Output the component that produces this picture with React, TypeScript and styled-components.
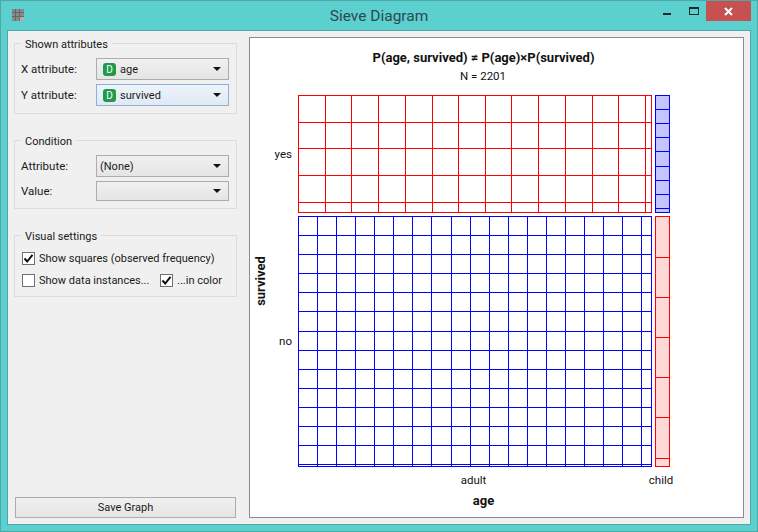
import styled, { createGlobalStyle } from 'styled-components'

const GlobalStyle = createGlobalStyle`
  html, body {
    margin: 0;
    padding: 0;
    background: #5ccfcf;
  }
  body {
    font-family: Roboto, "Noto Sans", sans-serif;
    font-size: 11px;
    color: #1a1a1a;
  }
`

const redX = [298, 325, 351, 378, 405, 432, 458, 485, 511, 538, 565, 592, 618, 645, 651]
const redY = [95, 122, 148, 175, 202, 212]
const blueX = [298, 317, 336, 355, 374, 393, 412, 431, 451, 470, 489, 508, 527, 546, 565, 584, 603, 622, 641, 651]
const blueY = [216, 235, 254, 273, 292, 311, 331, 350, 369, 388, 407, 426, 445, 464, 466]
const sideBlueY = [95, 109, 123, 137, 151, 166, 180, 194, 208, 212]
const sideRedY = [216, 257, 297, 337, 377, 417, 458, 466]

const Grid = ({ xs, ys, color }: { xs: number[]; ys: number[]; color: string }) => (
  <g stroke={color} strokeWidth="1" shapeRendering="crispEdges">
    {xs.map((x) => (
      <line key={x} x1={x + 0.5} x2={x + 0.5} y1={ys[0]} y2={ys[ys.length - 1] + 1} />
    ))}
    {ys.map((y) => (
      <line key={y} x1={xs[0]} x2={xs[xs.length - 1] + 1} y1={y + 0.5} y2={y + 0.5} />
    ))}
  </g>
)

const SideBar = ({ ys, color, fill }: { ys: number[]; color: string; fill: string }) => (
  <g shapeRendering="crispEdges">
    <rect x={655} y={ys[0]} width={15} height={ys[ys.length - 1] - ys[0] + 1} fill={fill} />
    <Grid xs={[655, 669]} ys={ys} color={color} />
  </g>
)

const Diagram = () => (
  <Plot viewBox="250 38 493 479">
    <PlotText x={483.5} y={62} textAnchor="middle" $bold>
      P(age, survived) ≠ P(age)×P(survived)
    </PlotText>
    <PlotText x={483} y={80} textAnchor="middle">N = 2201</PlotText>

    <Grid xs={redX} ys={redY} color="#ff0000" />
    <Grid xs={blueX} ys={blueY} color="#0000ff" />
    <SideBar ys={sideBlueY} color="#0000ff" fill="#c4c4ff" />
    <SideBar ys={sideRedY} color="#ff0000" fill="#ffd8d8" />

    <PlotText x={292} y={158} textAnchor="end">yes</PlotText>
    <PlotText x={292} y={345} textAnchor="end">no</PlotText>
    <PlotText x={473.5} y={484} textAnchor="middle">adult</PlotText>
    <PlotText x={661} y={484} textAnchor="middle">child</PlotText>
    <PlotText x={483.5} y={505} textAnchor="middle" $bold>age</PlotText>
    <PlotText x={265} y={281} textAnchor="middle" transform="rotate(-90 265 281)" $bold>
      survived
    </PlotText>
  </Plot>
)

const Combo = ({ value, tag, focused, short }: { value?: string; tag?: boolean; focused?: boolean; short?: boolean }) => (
  <ComboBox $focused={focused} $short={short}>
    {tag && <Tag>D</Tag>}
    <ComboValue>{value}</ComboValue>
    <Arrow />
  </ComboBox>
)

const Check = ({ checked }: { checked?: boolean }) => (
  <CheckBox>
    {checked && (
      <svg width="11" height="11" viewBox="0 0 11 11">
        <path d="M1.5 5.5 L4.2 8.5 L9.5 1.8" fill="none" stroke="#111" strokeWidth="2" />
      </svg>
    )}
  </CheckBox>
)

const App = () => {
  return (
    <Window>
      <GlobalStyle />
      <TitleBar>
        <AppIcon width="12" height="12" viewBox="0 0 12 12">
          <rect width="12" height="12" fill="#8a8a8a" />
          <path d="M0 3.5H12M0 7.5H12M3.5 0V12M7.5 0V12" stroke="#666" strokeWidth="1" />
          <rect x="8" y="8" width="4" height="4" fill="#a8b4b4" />
        </AppIcon>
        <Title>Sieve Diagram</Title>
        <Controls>
          <Minimize />
          <Maximize />
          <Close>
            <svg width="9" height="9" viewBox="0 0 9 9">
              <path d="M1 1L8 8M8 1L1 8" stroke="#fff" strokeWidth="2" />
            </svg>
          </Close>
        </Controls>
      </TitleBar>

      <Client>
        <Sidebar>
          <Group $height={71}>
            <Legend>Shown attributes</Legend>
            <FormRow>
              <FieldLabel>X attribute:</FieldLabel>
              <Combo value="age" tag />
            </FormRow>
            <FormRow>
              <FieldLabel>Y attribute:</FieldLabel>
              <Combo value="survived" tag focused />
            </FormRow>
          </Group>

          <Group $height={69}>
            <Legend>Condition</Legend>
            <FormRow>
              <FieldLabel>Attribute:</FieldLabel>
              <Combo value="(None)" />
            </FormRow>
            <FormRow>
              <FieldLabel>Value:</FieldLabel>
              <Combo short />
            </FormRow>
          </Group>

          <Group $height={62} $compact>
            <Legend>Visual settings</Legend>
            <CheckRow>
              <Check checked />
              Show squares (observed frequency)
            </CheckRow>
            <CheckRow>
              <Check />
              <WideLabel>Show data instances...</WideLabel>
              <Check checked />
              ...in color
            </CheckRow>
          </Group>

          <SaveButton>Save Graph</SaveButton>
        </Sidebar>

        <PlotPanel>
          <Diagram />
        </PlotPanel>
      </Client>
    </Window>
  )
}

const Window = styled.div`
  width: 758px;
  height: 532px;
  box-sizing: border-box;
  display: flex;
  flex-direction: column;
  background: #5ccfcf;
  border: 1px solid #4fa8a8;
  overflow: hidden;
`

const TitleBar = styled.div`
  position: relative;
  height: 29px;
  flex: none;
  display: flex;
  align-items: flex-start;
`

const AppIcon = styled.svg`
  margin: 8px 0 0 11px;
  flex: none;
`

const Title = styled.div`
  position: absolute;
  left: 0;
  right: 0;
  top: 4px;
  text-align: center;
  font-size: 15.5px;
  line-height: 22px;
  color: #2c4a4f;
`

const Controls = styled.div`
  margin-left: auto;
  margin-right: 6px;
  display: flex;
  align-items: flex-start;
  z-index: 1;
`

const Minimize = styled.div`
  width: 8px;
  height: 2px;
  margin-top: 12px;
  background: #1c2c2e;
`

const Maximize = styled.div`
  width: 10px;
  height: 8px;
  box-sizing: border-box;
  margin: 6px 7px 0 18px;
  border: 1px solid #1c2c2e;
  border-top-width: 2px;
`

const Close = styled.div`
  width: 45px;
  height: 20px;
  background: #c75050;
  display: flex;
  align-items: center;
  justify-content: center;
`

const Client = styled.div`
  flex: 1;
  margin: 0 6px 6px 6px;
  border: 1px solid #4fa8a8;
  background: #f0f0f0;
  display: flex;
  padding: 6px;
  min-height: 0;
`

const Sidebar = styled.div`
  width: 223px;
  flex: none;
  display: flex;
  flex-direction: column;
`

const Group = styled.div<{ $height: number; $compact?: boolean }>`
  position: relative;
  height: ${(p) => p.$height}px;
  box-sizing: border-box;
  margin-top: 6px;
  margin-bottom: 20px;
  border: 1px solid #dcdcdc;
  padding: ${(p) => (p.$compact ? '16px 6px 0 7px' : '14px 7px 0 6px')};
  display: flex;
  flex-direction: column;
  gap: ${(p) => (p.$compact ? '9px' : '4px')};
`

const Legend = styled.div`
  position: absolute;
  left: 6px;
  top: -7px;
  padding: 0 4px;
  background: #f0f0f0;
  line-height: 15px;
`

const FormRow = styled.div`
  display: flex;
  align-items: center;
`

const FieldLabel = styled.div`
  width: 75px;
  flex: none;
  font-size: 11.5px;
`

const ComboBox = styled.div<{ $focused?: boolean; $short?: boolean }>`
  width: 133px;
  height: ${(p) => (p.$short ? 20 : 22)}px;
  box-sizing: border-box;
  display: flex;
  align-items: center;
  padding: 0 7px 0 3px;
  border: 1px solid ${(p) => (p.$focused ? '#8db2d6' : '#acacac')};
  background: ${(p) =>
    p.$focused
      ? 'linear-gradient(#edf3fa, #e0e9f4)'
      : 'linear-gradient(#f0f0f0, #e5e5e5)'};
`

const Tag = styled.span`
  width: 13px;
  height: 13px;
  flex: none;
  margin: 0 4px 0 3px;
  border-radius: 3px;
  background: #1f9a4a;
  color: #fff;
  font-size: 10px;
  line-height: 13px;
  text-align: center;
`

const ComboValue = styled.span`
  flex: 1;
`

const Arrow = styled.span`
  width: 0;
  height: 0;
  border-left: 4px solid transparent;
  border-right: 4px solid transparent;
  border-top: 4px solid #111;
`

const CheckRow = styled.div`
  display: flex;
  align-items: center;
  height: 13px;
  white-space: nowrap;
`

const CheckBox = styled.span`
  width: 13px;
  height: 13px;
  box-sizing: border-box;
  flex: none;
  margin-right: 4px;
  border: 1px solid #707070;
  background: #fff;
  display: flex;
  align-items: center;
  justify-content: center;
`

const WideLabel = styled.span`
  width: 121px;
  flex: none;
`

const SaveButton = styled.div`
  margin-top: auto;
  height: 21px;
  box-sizing: border-box;
  width: 221px;
  margin-left: 1px;
  border: 1px solid #acacac;
  background: linear-gradient(#f0f0f0, #e5e5e5);
  text-align: center;
  line-height: 19px;
`

const PlotPanel = styled.div`
  margin-left: 12px;
  width: 495px;
  height: 481px;
  box-sizing: border-box;
  border: 1px solid #8a8a90;
  background: #fff;
`

const Plot = styled.svg`
  display: block;
  width: 493px;
  height: 479px;
`

const PlotText = styled.text<{ $bold?: boolean }>`
  font-family: Roboto, "Noto Sans", sans-serif;
  font-size: ${(p) => (p.$bold ? 13 : 11.5)}px;
  font-weight: ${(p) => (p.$bold ? 700 : 400)};
  fill: #111;
`

export default App
